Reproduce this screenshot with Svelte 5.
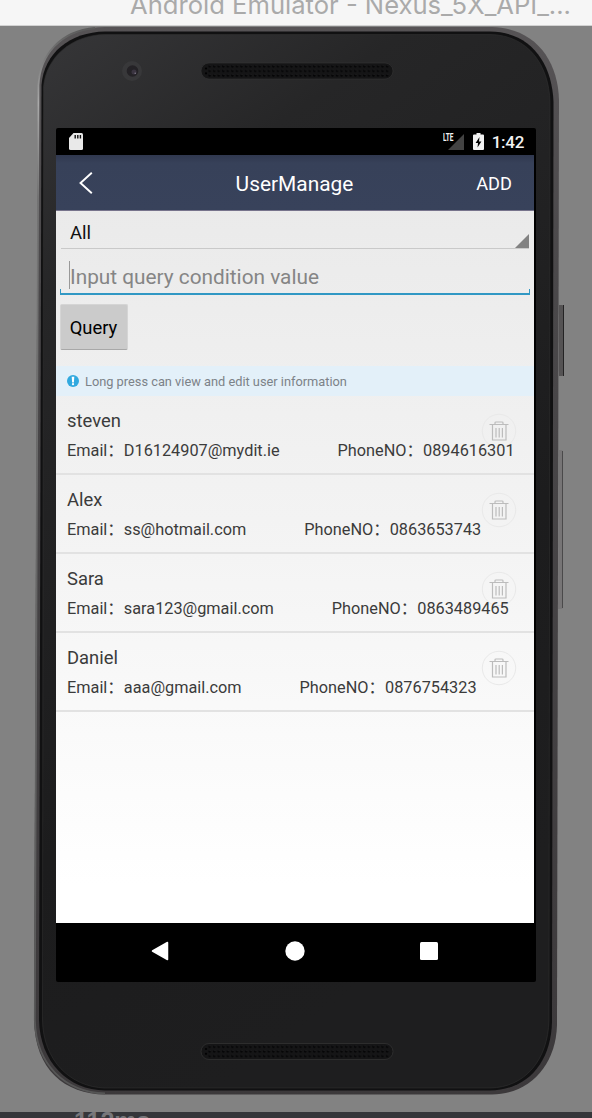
<script>
  const users = [
    { name: 'steven', email: 'D16124907@mydit.ie', phone: '0894616301' },
    { name: 'Alex', email: 'ss@hotmail.com', phone: '0863653743' },
    { name: 'Sara', email: 'sara123@gmail.com', phone: '0863489465' },
    { name: 'Daniel', email: 'aaa@gmail.com', phone: '0876754323' }
  ];
</script>

{#snippet grille(y, edge)}
  <rect x="201" y={y} width="192" height="16" rx="8" fill="#151516" stroke={edge} stroke-width=".6" />
  <g transform="translate(205 {y})">
    <rect x="3" y="0.5" width="181" height="15" fill="url(#holes)" />
    <g fill="#020203">
      <circle cx="1" cy="5.5" r="1.1" /><circle cx="1" cy="10.3" r="1.1" />
    </g>
  </g>
{/snippet}

<div class="desktop">
  <header class="window-title"><span>Android Emulator - Nexus_5X_API_...</span></header>

  <main class="emulator">
    <svg class="phone" width="592" height="1086" viewBox="0 26 592 1086" aria-hidden="true">
      <defs>
        <linearGradient id="rim" x1="0" y1="0" x2="0" y2="1">
          <stop offset="0" stop-color="#565355" />
          <stop offset=".25" stop-color="#4a484a" />
          <stop offset="1" stop-color="#3c393b" />
        </linearGradient>
        <linearGradient id="shine" x1="0" y1="0" x2="0" y2="1">
          <stop offset="0" stop-color="#5a5a5a" />
          <stop offset=".07" stop-color="#aaaaaa" />
          <stop offset=".16" stop-color="#747474" />
          <stop offset="1" stop-color="#555" />
        </linearGradient>
        <linearGradient id="face" x1="0" y1="0" x2=".35" y2="1">
          <stop offset="0" stop-color="#363638" />
          <stop offset=".22" stop-color="#262627" />
          <stop offset=".7" stop-color="#1c1c1d" />
          <stop offset="1" stop-color="#1e1e1f" />
        </linearGradient>
        <pattern id="holes" width="4.55" height="4.6" patternUnits="userSpaceOnUse" x="2.5" y="1">
          <circle cx="2.2" cy="2.3" r="1.15" fill="#020203" />
          <circle cx="2.7" cy="1.6" r=".45" fill="#39393b" />
        </pattern>
      </defs>
      <path d="M559 305h3q2 0 2 2v67q0 2-2 2h-3z" fill="#555354" /><path d="M563.5 305v71" stroke="#242324" />
      <path d="M559 450h2q2 0 2 2v155q0 2-2 2h-3z" fill="#777576" /><path d="M562.5 451v157" stroke="#4a494a" />
      <path d="M105 27H492C535 28 558 60 559 100L557 1025C556 1065 530 1094 492 1094.500H105C65 1094 35 1070 34 1020L38 85C40 50 68 27 105 27Z" fill="url(#rim)" />
      <path d="M95 28C60 31 40 55 38.500 85L34.800 1020C36 1065 65 1092 105 1093.500" fill="none" stroke="url(#shine)" stroke-width="1.800" />
      <path d="M105 31.500H490C530 32 552 62 553.500 102L552 1022C551 1062 528 1090 490 1090.500H105C68 1090 40 1062 39 1020L41.500 85C44 53 70 32 105 31.500Z" fill="#111112" />
      <path d="M105 34.500H490C528 35 549 65 550 102L549 1020C548 1060 525 1087.500 490 1088H105C70 1087 43 1060 42.500 1020L43.500 87C46 57 72 35 105 34.500Z" fill="url(#face)" stroke="#303031" stroke-width=".6" />
      <circle cx="132" cy="71" r="10" fill="#38383a" />
      <circle cx="132.500" cy="71" r="5.800" fill="#242226" />
      <circle cx="134" cy="72" r="2.500" fill="#3a3440" /><circle cx="135.200" cy="73.300" r=".7" fill="#8a8494" />
      {@render grille(63, '#353536')}
      {@render grille(1043.5, '#3a3a3b')}
    </svg>

    <section class="screen">
      <div class="status">
        <svg class="sd" width="14" height="17" viewBox="0 0 14 17"><path d="M4.500 0H12.500Q14 0 14 1.500V15.500Q14 17 12.500 17H1.500Q0 17 0 15.500V5Z" fill="#e9e9e9" /><path d="M6.200 2v3.500M8.800 2v3.500M11.400 2v3.500" stroke="#111" stroke-width="1.400" /></svg>
        <svg class="signal" width="21" height="18" viewBox="0 0 21 18"><path d="M5 17 21 1V17Z" fill="#434343" /><path d="M0 0H11V7L7 11H0Z" fill="#000" /><text x="0" y="8" textLength="10.500" lengthAdjust="spacingAndGlyphs">LTE</text></svg>
        <svg class="battery" width="11" height="17" viewBox="0 0 11 17"><path d="M3.500 0H7.500V1.500H10Q11 1.500 11 2.500V16Q11 17 10 17H1Q0 17 0 16V2.500Q0 1.500 1 1.500H3.500Z" fill="#f2f2f2" /><path d="M6.500 4 2.600 10H5L4.500 14.500 8.400 8.500H6Z" fill="#000" /></svg>
        <time>1:42</time>
      </div>

      <div class="view">
        <nav class="appbar">
          <svg width="16" height="24" viewBox="0 0 16 24"><path d="M13.800 1.800 2.500 12 13.800 22.200" fill="none" stroke="#fff" stroke-width="1.900" /></svg>
          <h1>UserManage</h1>
          <span class="add">ADD</span>
        </nav>

        <div class="spinner"><span>All</span><svg width="14" height="14" viewBox="0 0 14 14"><path d="M0 14 14 0V14Z" fill="#828282" /></svg></div>
        <div class="field"><i class="caret"></i><span>Input query condition value</span></div>
        <div class="actions"><button>Query</button></div>
        <div class="hint">
          <svg width="12" height="12" viewBox="0 0 12 12"><circle cx="6" cy="6" r="6" fill="#31a9df" /><path d="M4.700 1.800H7.300L6.900 7.600H5.100Z" fill="#fff" /><circle cx="6" cy="9.200" r="1.100" fill="#fff" /></svg>
          <span>Long press can view and edit user information</span>
        </div>

        <ul class="users">
          {#each users as u}
            <li>
              <svg class="trash" width="36" height="36" viewBox="0 0 36 36" fill="none">
                <circle cx="18" cy="18" r="16.700" stroke="#e9e9e9" />
                <g stroke="#bcbcbc" stroke-width="1.200">
                  <path d="M8.500 11.500H27.500M14 11V9.800Q14 9 15 9H21Q22 9 22 9.800V11" />
                  <path d="M11.500 12V27H25V12M15 15V24.500M18.200 15V24.500M21.400 15V24.500" />
                </g>
              </svg>
              <div class="name">{u.name}</div>
              <div class="details">
                <span>Email<b>：</b>{u.email}</span>
                <span>PhoneNO<b>：</b>{u.phone}</span>
              </div>
            </li>
          {/each}
        </ul>
      </div>

      <footer class="navkeys">
        <svg width="18" height="20" viewBox="0 0 18 20"><path d="M16.500 1.500V18.500L1.500 10Z" fill="#fff" stroke="#fff" stroke-width="1.500" stroke-linejoin="round" /></svg>
        <svg width="20" height="20" viewBox="0 0 20 20"><circle cx="10" cy="10" r="9.700" fill="#fff" /></svg>
        <svg width="18" height="18" viewBox="0 0 18 18"><rect width="18" height="18" rx="1.500" fill="#fff" /></svg>
      </footer>
    </section>
  </main>

  <footer class="backdrop"><span>112ms</span></footer>
</div>

<style>
  :global(body) { margin: 0; }
  .desktop {
    width: 592px; height: 1118px; overflow: hidden;
    display: grid; grid-template-rows: 26px 1086px 6px;
    background: #828282; font-family: Roboto, "Noto Sans CJK SC", sans-serif;
  }
  svg { display: block; flex: none; }
  .window-title {
    box-sizing: border-box; overflow: hidden; padding-left: 130px;
    background: #f6f6f6; border-bottom: 1px solid #d2d2d2;
    color: #aaa; font: 25.600px/30px Inter, sans-serif; white-space: nowrap;
  }
  .window-title span { display: block; margin-top: -10px; }
  .emulator { display: grid; grid-template-columns: 592px; grid-template-rows: 1086px; }
  .phone, .screen { grid-area: 1 / 1; }
  .screen {
    z-index: 1; margin: 102px 0 0 56px; width: 480px; height: 854px;
    display: grid; grid-template-rows: 27px 768px 59px;
    background: #000; border-radius: 2px;
  }
  .status { display: flex; align-items: center; padding: 0 12px 0 13px; color: #f2f2f2; }
  .signal { margin-left: auto; margin-right: 9px; }
  .signal text { font: 700 10px Roboto, sans-serif; fill: #f3f3f3; }
  .battery { margin-right: 8px; }
  time { font-size: 17px; font-weight: 500; letter-spacing: -.3px; }
  .view {
    width: 478px; display: flex; flex-direction: column;
    background: linear-gradient(#e9e9e9, #ededed 20%, #f4f4f4 52%, #fff 95%);
  }
  .appbar {
    box-sizing: border-box; height: 56px; flex: none; display: grid;
    grid-template-columns: 1fr auto 1fr; align-items: center; padding: 0 22px;
    background: linear-gradient(#30384f, #374159 15%, #38425b);
    border-bottom: 1px solid #77748c; color: #fff;
  }
  h1 { margin: 2px 1px 0 0; font-size: 20.900px; font-weight: 400; }
  .add { justify-self: end; margin-top: 2px; font-size: 18.200px; }
  .spinner {
    box-sizing: border-box; height: 38px; margin: 0 5px; flex: none;
    border-bottom: 1px solid #c9c9c9; display: flex; align-items: flex-end;
    justify-content: space-between; padding-left: 9px; font-size: 18.500px; color: #111;
  }
  .spinner span { line-height: 29px; }
  .field {
    box-sizing: border-box; height: 46px; margin: 0 4px; flex: none;
    display: flex; align-items: center; padding: 11px 0 0 9px;
    border-bottom: 2px solid #3198c4; color: #858585; font-size: 20.800px;
    background: linear-gradient(#3198c4, #3198c4) 0 100% / 1px 4px no-repeat,
      linear-gradient(#3198c4, #3198c4) 100% 100% / 1px 4px no-repeat;
  }
  .caret { width: 1px; height: 28px; background: #999; margin-top: -3px; }
  .actions { height: 71px; flex: none; padding: 9px 4px 0; box-sizing: border-box; }
  button {
    display: block; box-sizing: border-box; width: 68px; height: 46px; padding: 0 1px 0 0;
    border: 1px solid #d5d5d5; border-bottom-color: #a8a8a8; border-radius: 2px;
    background: #cbcbcb; color: #000; font: 18.400px Roboto, sans-serif;
  }
  .hint {
    height: 30px; flex: none; display: flex; align-items: center; gap: 6px;
    padding-left: 11px; background: #e3f0f9; color: #7c8288; font-size: 12.800px;
  }
  .users { list-style: none; margin: 0; padding: 0; }
  li {
    box-sizing: border-box; height: 79px; padding: 13px 17px 0 11px; color: #3b3b3b;
    border-bottom: 2px solid #e2e2e2; display: grid; grid-template-columns: 1fr 36px;
    grid-template-rows: 24px 36px; white-space: nowrap;
  }
  .name { grid-area: 1 / 1; font-size: 18.400px; line-height: 24px; }
  .details { grid-area: 2 / 1 / 3 / 3; display: flex; gap: 58px; font-size: 16.300px; line-height: 36px; }
  b { display: inline-block; width: 16.500px; font-weight: 400; line-height: 1; }
  .trash { grid-area: 1 / 2; margin: 4px 0 0; }
  .navkeys { display: flex; align-items: center; padding: 0 98px 3px 95px; justify-content: space-between; }
  .navkeys svg { margin-bottom: 1px; }
  .backdrop { background: #35363a; overflow: hidden; padding-left: 74px; color: #77777a; }
  .backdrop span { display: block; margin-top: -4px; font: 700 25px/26px "Liberation Sans", sans-serif; }
</style>
